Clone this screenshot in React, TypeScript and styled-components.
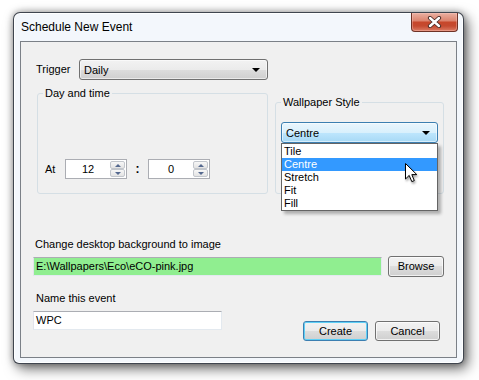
import React from 'react';
import styled, { createGlobalStyle } from 'styled-components';

const GlobalStyle = createGlobalStyle`
    html, body {
        margin: 0;
        background: #ffffff;
    }
    body {
        font-family: "Liberation Sans", Arial, sans-serif;
        font-size: 11px;
        color: #000;
    }
`

const Stage = styled.div`
    width: 479px;
    height: 380px;
    box-sizing: border-box;
    padding: 12px 0 0 13px;
    overflow: hidden;
`

const Window = styled.div`
    width: 451px;
    height: 352px;
    box-sizing: border-box;
    display: flex;
    flex-direction: column;
    background: #f3f7fc;
    border: 1px solid rgba(30, 38, 48, 0.85);
    border-radius: 7px 7px 6px 6px;
    box-shadow: 4px 5px 13px rgba(0, 0, 0, 0.55), 0 0 7px rgba(0, 0, 0, 0.35), inset 0 0 0 1px rgba(255, 255, 255, 0.9);
`

const TitleBar = styled.div`
    height: 28px;
    display: flex;
    align-items: flex-start;
    padding-left: 7px;
`

const Title = styled.div`
    flex: 1;
    font-size: 12px;
    line-height: 28px;
    color: #000;
`

const CloseButton = styled.div`
    width: 47px;
    height: 19px;
    margin-right: 5px;
    box-sizing: border-box;
    display: flex;
    align-items: center;
    justify-content: center;
    border: 1px solid #6e3226;
    border-top: none;
    border-radius: 0 0 4px 4px;
    background: linear-gradient(#eab0a2 0%, #dc8570 42%, #c7472b 52%, #c54a30 72%, #dc7c64 100%);
    box-shadow: inset 0 0 0 1px rgba(255, 210, 200, 0.35);
`

const Client = styled.div`
    flex: 1;
    margin: 0 6px 5px 6px;
    border: 1px solid #7b8087;
    background: #f0f0f0;
`

const Content = styled.div`
    display: flex;
    flex-direction: column;
    padding: 17px 0 0 12px;
`

const TriggerRow = styled.div`
    display: flex;
    align-items: center;
    height: 21px;
`

const Label = styled.div<{ $indent?: number; $width?: number; $top?: number }>`
    margin-left: ${p => p.$indent ?? 0}px;
    margin-top: ${p => p.$top ?? 0}px;
    ${p => p.$width ? `width: ${p.$width}px;` : ''}
    line-height: 13px;
    white-space: nowrap;
`

const Combo = styled.div<{ $width: number; $hot?: boolean }>`
    width: ${p => p.$width}px;
    height: 21px;
    box-sizing: border-box;
    display: flex;
    align-items: center;
    justify-content: space-between;
    padding: 0 7px 0 4px;
    border: 1px solid ${p => p.$hot ? '#3c7fb1' : '#707070'};
    border-radius: 3px;
    background: ${p => p.$hot
        ? 'linear-gradient(#eaf6fd 0%, #d9f0fc 50%, #bee6fd 50%, #a7d9f5 100%)'
        : 'linear-gradient(#f2f2f2 0%, #ebebeb 50%, #dddddd 50%, #cfcfcf 100%)'};
    box-shadow: inset 0 0 0 1px rgba(255, 255, 255, 0.55);
`

const Arrow = styled.span`
    width: 0;
    height: 0;
    border-left: 4px solid transparent;
    border-right: 4px solid transparent;
    border-top: 4px solid #000;
`

const GroupRow = styled.div`
    display: flex;
    align-items: flex-end;
    gap: 7px;
    margin: 7px 0 0 4px;
`

const GroupBox = styled.fieldset<{ $width: number; $height: number }>`
    width: ${p => p.$width}px;
    height: ${p => p.$height}px;
    box-sizing: border-box;
    margin: 0;
    padding: 0;
    min-width: 0;
    border: 1px solid #d5dfe5;
    border-radius: 3px;

    legend {
        margin-left: 5px;
        padding: 0 2px;
        font-size: 11px;
        line-height: 13px;
    }
`

const AtRow = styled.div`
    display: flex;
    align-items: center;
    height: 20px;
    margin-top: 59px;
    padding-left: 7px;
`

const Numeric = styled.div`
    width: 62px;
    height: 20px;
    box-sizing: border-box;
    display: flex;
    border: 1px solid #abadb3;
    background: #fff;

    .value {
        flex: 1;
        text-align: center;
        line-height: 18px;
    }
`

const Spinner = styled.div`
    width: 15px;
    display: flex;
    flex-direction: column;
    padding: 1px 1px 1px 0;
`

const SpinButton = styled.div<{ $down?: boolean }>`
    flex: 1;
    display: flex;
    align-items: center;
    justify-content: center;
    border: 1px solid #c2c6cc;
    border-radius: 2px;
    background: linear-gradient(#f7f7f7, #e3e3e3);

    &::after {
        content: '';
        border-left: 3px solid transparent;
        border-right: 3px solid transparent;
        ${p => p.$down ? 'border-top: 3px solid #55698f;' : 'border-bottom: 3px solid #55698f;'}
    }
`

const Colon = styled.div`
    width: 21px;
    text-align: center;
    font-weight: bold;
    font-size: 12px;
`

const DropWrap = styled.div`
    position: relative;
    margin: 13px 0 0 5px;
    width: 157px;
`

const DropList = styled.div`
    position: absolute;
    top: 100%;
    left: 0;
    width: 157px;
    box-sizing: border-box;
    padding-top: 1px;
    border: 1px solid #646464;
    background: #fff;
    box-shadow: 3px 3px 3px rgba(0, 0, 0, 0.28);
    z-index: 2;
`

const ListItem = styled.div<{ $selected?: boolean }>`
    height: 13px;
    line-height: 13px;
    padding-left: 2px;
    background: ${p => p.$selected ? '#3399ff' : 'transparent'};
    color: ${p => p.$selected ? '#fff' : '#000'};
`

const Cursor = styled.svg`
    position: absolute;
    left: 124px;
    top: 41px;
    z-index: 3;
    filter: drop-shadow(1px 2px 1px rgba(0, 0, 0, 0.35));
`

const FieldRow = styled.div`
    display: flex;
    align-items: center;
    gap: 6px;
    height: 22px;
    margin-top: 4px;
`

const TextBox = styled.div<{ $width: number; $green?: boolean }>`
    width: ${p => p.$width}px;
    height: 19px;
    box-sizing: border-box;
    padding-left: 2px;
    line-height: 17px;
    border: 1px solid;
    border-color: #abadb3 #e3e9ef #e3e9ef #e2e3ea;
    background: ${p => p.$green ? '#90ee90' : '#fff'};
`

const Button = styled.div<{ $default?: boolean; $width: number; $height: number }>`
    width: ${p => p.$width}px;
    height: ${p => p.$height}px;
    box-sizing: border-box;
    display: flex;
    align-items: center;
    justify-content: center;
    border: 1px solid ${p => p.$default ? '#3c7fb1' : '#707070'};
    border-radius: 3px;
    background: linear-gradient(#f2f2f2 0%, #ebebeb 50%, #dddddd 50%, #cfcfcf 100%);
    box-shadow: inset 0 0 0 1px ${p => p.$default ? '#5fd0f6' : 'rgba(255, 255, 255, 0.7)'};
`

const BottomRow = styled.div`
    display: flex;
    align-items: flex-start;
    margin-top: 6px;
`

const ButtonBar = styled.div`
    display: flex;
    gap: 7px;
    margin: 10px 0 0 81px;
`

const styles = ['Tile', 'Centre', 'Stretch', 'Fit', 'Fill'];

const App = () => {
    return (
        <>
            <GlobalStyle />
            <Stage>
                <Window>
                    <TitleBar>
                        <Title>Schedule New Event</Title>
                        <CloseButton>
                            <svg width="15" height="12" viewBox="0 0 15 12">
                                <path d="M3 2 L12 10 M12 2 L3 10" stroke="#4a2a25" strokeWidth="4.2" strokeLinecap="round" />
                                <path d="M3 2 L12 10 M12 2 L3 10" stroke="#ffffff" strokeWidth="2.4" strokeLinecap="round" />
                            </svg>
                        </CloseButton>
                    </TitleBar>
                    <Client>
                        <Content>
                            <TriggerRow>
                                <Label $indent={3} $width={43}>Trigger</Label>
                                <Combo $width={189}>Daily<Arrow /></Combo>
                            </TriggerRow>
                            <GroupRow>
                                <GroupBox $width={231} $height={107}>
                                    <legend>Day and time</legend>
                                    <AtRow>
                                        <Label $width={20}>At</Label>
                                        <Numeric>
                                            <div className='value'>12</div>
                                            <Spinner><SpinButton /><SpinButton $down /></Spinner>
                                        </Numeric>
                                        <Colon>:</Colon>
                                        <Numeric>
                                            <div className='value'>0</div>
                                            <Spinner><SpinButton /><SpinButton $down /></Spinner>
                                        </Numeric>
                                    </AtRow>
                                </GroupBox>
                                <GroupBox $width={169} $height={98}>
                                    <legend>Wallpaper Style</legend>
                                    <DropWrap>
                                        <Combo $width={157} $hot>Centre<Arrow /></Combo>
                                        <DropList>
                                            {styles.map(s => (
                                                <ListItem key={s} $selected={s === 'Centre'}>{s}</ListItem>
                                            ))}
                                        </DropList>
                                        <Cursor width="13" height="20" viewBox="0 0 13 20">
                                            <path d="M0.5 0.5 L0.5 16 L4.2 12.4 L6.8 18.6 L9.3 17.6 L6.8 11.6 L11.8 11.6 Z" fill="#fff" stroke="#000" strokeWidth="1" strokeLinejoin="miter" />
                                        </Cursor>
                                    </DropWrap>
                                </GroupBox>
                            </GroupRow>
                            <Label $indent={2} $top={44}>Change desktop background to image</Label>
                            <FieldRow>
                                <TextBox $width={349} $green>E:\Wallpapers\Eco\eCO-pink.jpg</TextBox>
                                <Button $width={56} $height={21}>Browse</Button>
                            </FieldRow>
                            <Label $indent={3} $top={15}>Name this event</Label>
                            <BottomRow>
                                <TextBox $width={189}>WPC</TextBox>
                                <ButtonBar>
                                    <Button $width={65} $height={20} $default>Create</Button>
                                    <Button $width={65} $height={20}>Cancel</Button>
                                </ButtonBar>
                            </BottomRow>
                        </Content>
                    </Client>
                </Window>
            </Stage>
        </>
    )
}

export default App
